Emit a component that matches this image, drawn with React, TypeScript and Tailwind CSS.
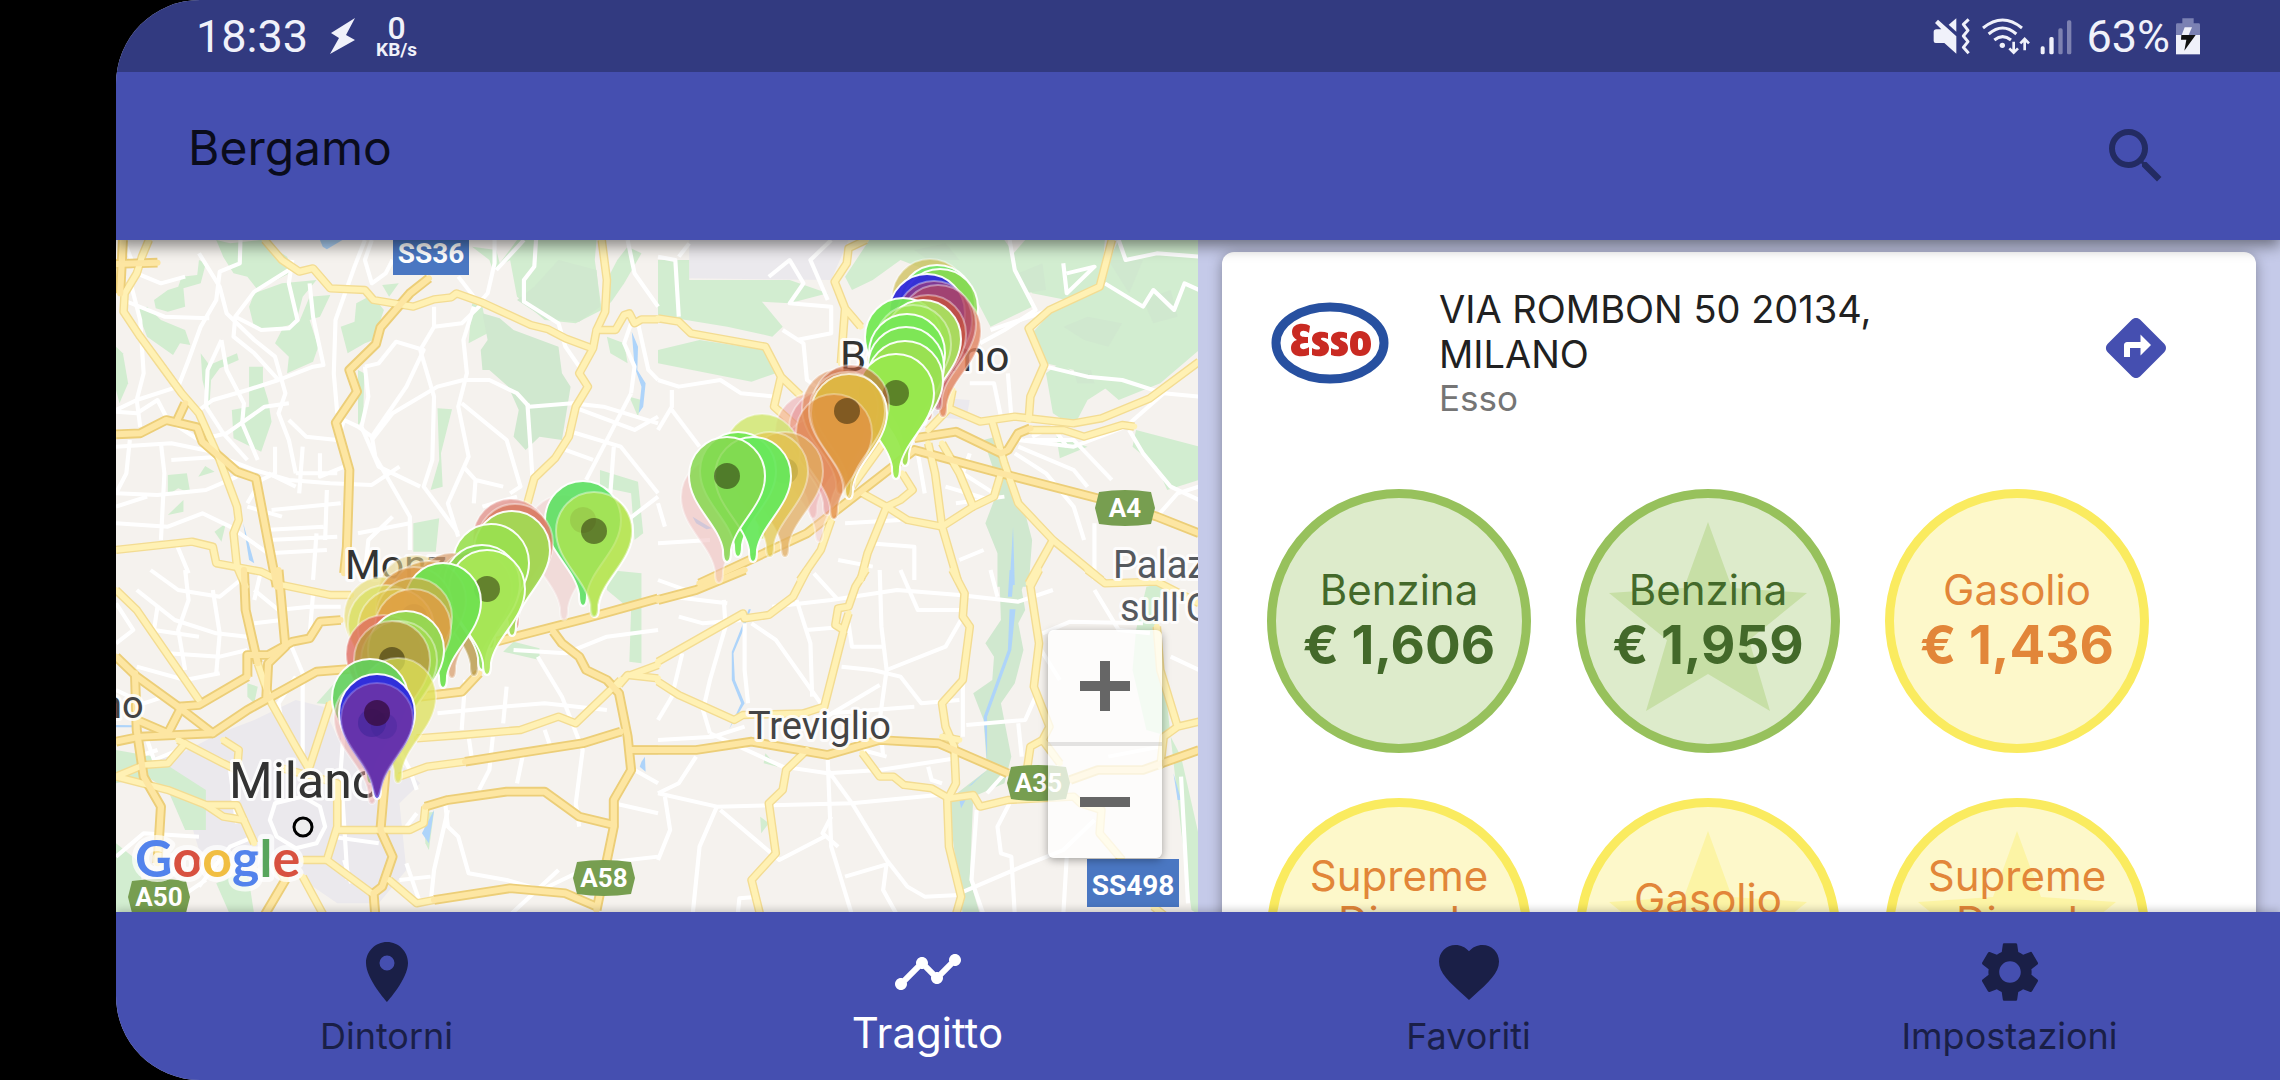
import React from 'react';
import { MdDirections, MdFavorite, MdPlace, MdSearch, MdSettings, MdTimeline } from 'react-icons/md';

/* ---------- Map data: four tiles, each drawn on its own 1568 x 1020 grid ---------- */

type Tile = {
  transform: string;
  green: string[];
  shade: string[];
  urban: string[];
  water: string[];
  streets: string[];
  roads: string[];
  highways: string[];
};

const tiles: Tile[] = [
  {
    transform: 'scale(0.3457 0.3333)',
    green: [
      'M290,0 L330,10 420,0 495,50 510,95 410,150 380,110 340,100 310,50Z',
      'M110,180 L150,150 180,140 190,110 235,105 240,60 260,70 245,130 195,145 200,200 150,215 115,205Z',
      'M385,200 L400,160 480,130 580,120 540,170 520,250 450,270 400,265Z',
      'M560,170 L620,165 590,230 560,240 585,320 570,365 495,400 500,350 460,310 480,270 530,245Z',
      'M60,210 L90,200 130,240 200,270 215,315 185,310 165,345 90,290Z',
      'M695,190 L740,165 775,210 745,300 720,310 670,340 650,260 690,245Z',
      'M1030,20 L1100,30 1110,70 1160,0 1390,0 1385,60 1405,210 1330,250 1240,240 1160,170 1140,60 1090,90 1080,60Z',
      'M245,340 L270,375 350,340 355,360 300,385 275,420 270,505 250,420Z',
      'M385,380 L425,380 425,430 440,480 450,545 420,635 340,595 335,510 385,500Z',
      'M930,505 L972,508 940,640 945,740 910,750 935,660Z',
      'M1400,690 L1510,725 1525,880 1500,900 1490,760 1400,740Z',
      'M150,705 L205,700 215,760 180,745 150,765Z',
      'M238,710 L258,678 285,695Z',
      'M150,825 L195,780 195,815Z',
      'M285,875 L318,850 305,905Z',
      'M0,320 L20,340 35,430 10,490 0,450Z',
      'M1480,20 L1520,40 1470,130 1430,190 1420,120 1450,60Z',
      'M860,850 L935,835 925,935 860,935Z',
      'M700,390 L718,400 715,540 700,555Z',
      'M770,135 L818,130 790,170Z',
      'M1030,190 L1060,200 1075,280 1020,310Z',
      'M1420,290 L1470,310 1480,370 1430,340Z',
      'M1485,470 L1520,480 1510,530Z',
    ],
    shade: [
      'M1060,220 L1110,235 1150,270 1280,320 1290,400 1315,440 1290,600 1225,590 1185,630 1150,590 1165,510 1135,440 1080,390 1060,390 1055,330 1075,300Z',
      'M1160,180 L1210,140 1280,60 1390,90 1400,200 1340,245 1240,235Z',
    ],
    urban: [],
    water: ['M590,0 L655,0 610,28 598,20Z', 'M1492,275 L1510,320 1508,390 1532,430 1525,500 1512,520 1520,440 1500,380Z', 'M368,850 L400,970 385,960Z'],
    streets: [
      'M240,40 L300,140 320,220 400,300 460,350 490,460 470,520 500,600 520,700',
      'M360,0 L358,70 300,95 290,180 245,260 210,360 180,440 60,480 0,510',
      'M500,90 L400,155 345,230 340,290 400,340 470,420',
      'M510,60 L500,130 525,240 500,265 420,270 345,230',
      'M560,130 L570,230 600,375 570,380 470,420 380,450 280,480 240,510',
      'M720,0 L690,80 635,240 630,400 640,520',
      'M740,0 L720,60 740,130 780,100 800,60',
      'M305,300 L265,390 260,500 310,580 380,660',
      'M305,300 L320,390 370,490 365,550 410,660',
      'M40,120 L70,240 80,400 60,480 70,560',
      'M0,515 L60,520 120,480 150,540 240,600 320,580 430,500 500,490',
      'M0,620 L160,610 300,640',
      'M40,600 L30,700 0,760 120,765 260,750 350,710',
      'M130,610 L140,700 130,900',
      'M0,850 L150,860 250,820 330,860 440,940 610,930',
      'M160,660 L300,650 400,690 500,720 620,730 740,735 820,680',
      'M460,620 L460,700 420,720 380,790',
      'M500,540 L550,590 640,600 660,540 700,560 740,590 750,650 850,830 850,930',
      'M520,700 L640,700 M540,620 L530,760 M590,640 L590,710 660,680',
      'M450,810 L650,790 M430,870 L600,860 M440,900 L640,890 M580,880 L570,1020 M610,750 L605,900',
      'M720,380 L760,370 810,305 890,330 840,440 740,590',
      'M720,380 L730,470 710,560 760,680 880,740',
      'M880,330 L920,470 915,660 890,740 940,810 990,880',
      'M1005,420 L930,440 800,520 740,600',
      'M1035,200 L1005,300 1015,400 990,500 1020,650 960,790 990,890',
      'M920,200 L920,260 880,330 M920,260 L1000,250 1060,190',
      'M1005,420 L1080,420 1160,460 1195,500 1320,490 1410,500 1568,550',
      'M1190,490 L1200,640 1205,720',
      'M1000,490 L1130,600 1170,740 1140,760',
      'M1005,680 L1040,720 1035,790 M1040,720 L1120,740 M1060,800 L1160,770',
      'M1095,0 L1095,70 1075,160 1050,190 990,110',
      'M1215,0 L1210,80 1180,120 1180,185 1280,250 1300,320 1340,380',
      'M1180,0 L1100,90 M1480,0 L1500,100 1568,200',
      'M1320,500 L1500,570 1568,530 M1300,570 L1460,620 1568,760',
      'M1490,460 L1440,560 1360,720 M1300,630 L1380,660 M1440,620 L1430,760',
      'M1490,250 L1470,310 1500,380 1490,460 M1510,250 L1540,390 1568,420',
      'M700,880 L850,850 M720,1000 L730,900 800,830 M1480,840 L1568,770',
      'M30,20 L60,100 130,130 200,110 M20,180 L140,230 270,235',
      'M440,700 L520,740 M380,800 L480,830 M170,900 L210,1000 M0,800 L90,770',
    ],
    roads: [
      'M95,0 L75,50 60,100 25,160 22,215 70,290 130,375 190,460 240,520 300,660 350,800 355,840 340,880 350,980 375,1040',
      'M430,0 L480,60 530,95 570,85 620,145 720,150 745,180 860,200 920,178 970,172 985,160 1060,188 1200,255 1250,268 1300,295 1370,322',
      'M1405,0 L1420,120 1415,215 1390,270 1380,325 1340,400 1365,440 1330,500 1310,590 1270,655 1210,715 1190,790',
      'M1390,270 L1445,270 1470,225 1485,220 1500,250 1520,238 1568,238',
      'M0,930 L220,905 280,920 290,970 420,995 470,1020',
    ],
    highways: [
      'M20,0 L12,160 M0,72 L120,68',
      'M905,115 L850,160 765,262 752,312 675,390 697,455 636,548 675,690 668,920 660,1000',
      'M0,583 L70,580 145,540 235,562 250,605 350,695 405,715 465,1040',
      'M200,490 L175,545',
    ],
  },
  {
    transform: 'translate(542 0) scale(0.3464 0.3333)',
    green: [
      'M610,0 L1000,0 1040,60 1080,200 960,260 900,140 700,60 620,120 560,150 540,110Z',
      'M1060,0 L1290,0 1280,130 1180,180 1080,160 1010,60Z',
      'M1330,0 L1562,0 1562,330 1450,430 1330,480 1240,400 1120,370 1080,280 1140,210 1260,150Z',
      'M0,60 L90,60 90,120 380,120 490,160 380,190 300,185 360,260 330,290 200,260 50,235 0,230Z',
      'M0,330 L120,300 310,330 340,400 270,425 0,370Z',
      'M1120,400 L1160,370 1220,410 1330,420 1240,480 1200,560 1140,520Z',
      'M1380,570 L1562,620 1562,720 1470,750 1440,680 1370,620Z',
      'M1150,590 L1240,620 1160,655Z',
    ],
    shade: [
      'M940,600 L975,590 1000,700 1050,780 1080,900 1070,1040 980,1040 980,940 945,850 985,740Z',
      'M1170,260 L1240,230 1340,250 1300,320 1230,300Z',
      'M1040,100 L1110,70 1120,150 1060,160Z',
      'M1300,60 L1400,60 1360,160Z',
      'M1400,180 L1480,150 1500,230 1430,250Z',
      'M740,30 L830,10 870,60 780,60Z',
      'M1200,390 L1250,390 1260,430 1210,430Z',
    ],
    urban: ['M90,0 L550,0 500,120 90,115Z', 'M770,470 L900,480 890,540 800,530Z'],
    water: ['M1025,860 L1030,1035 1015,1035Z', 'M100,830 L155,865 140,868 110,850Z'],
    streets: [
      'M0,50 L50,60 60,230 M90,10 L60,50',
      'M320,110 L380,60 420,130 380,190 500,200 500,280 400,300',
      'M500,0 L440,60 490,180',
      'M1015,0 L1030,90 1090,210 1000,270 930,310',
      'M1130,210 L960,270 M1170,70 L1180,160 1260,80 1180,100',
      'M1290,130 L1400,200 1430,150 1490,210 1520,130 1562,150',
      'M1330,0 L1350,60 1440,40 1562,50',
      'M0,420 L60,440 180,420 240,460 340,470',
      'M40,450 L40,500 0,570 M40,510 L120,620',
      'M360,270 L420,310 430,420 510,480',
      'M900,430 L970,430 990,530 M1010,400 L1020,530',
      'M1120,380 L1240,410 1340,420 1460,460 1562,470',
      'M1460,460 L1350,560 1200,620 1040,600',
      'M1040,620 L1200,690 1240,740 M1060,600 L1200,600 1310,720',
      'M1030,640 L1120,700 1200,800 1230,900',
      'M1260,850 L1260,1020 M1360,570 L1400,640 1480,740 1562,780',
      'M540,850 L700,840 M610,910 L740,920 740,1020 M520,960 L620,980',
      'M860,790 L1000,770 M830,740 L960,780 M870,960 L940,930',
      'M0,790 L20,860 M0,910 L150,900 M750,640 L770,760 M900,640 L880,700 970,760',
      'M1440,830 L1500,760 1562,740 M1180,620 L1140,560 1080,590',
    ],
    roads: [
      'M600,0 L550,25 545,70 510,125 540,205 585,260 M540,205 L528,370',
      'M0,235 L60,245 95,280 310,320 355,410 410,465 M355,410 L335,500 400,560',
      'M1310,0 L1275,140 1130,210 1070,265 1115,375 1075,470 1070,540',
      'M840,505 L930,545 1030,530 1200,550 1280,535 1420,475 1562,365',
      'M1075,570 L1170,570 1230,590 1340,555 1375,560',
      'M965,545 L1000,670 1040,790 1140,900 1280,1020',
      'M1140,900 L1070,1030',
      'M780,610 L800,700 820,860 865,1020',
      'M820,610 L870,700 910,800 970,770 990,700',
      'M590,760 L660,800 720,840 820,860 910,800',
      'M660,800 L605,940 585,1020',
      'M705,700 L735,750 700,780 660,800',
      'M850,450 L840,505 780,570',
      'M500,840 L470,930 410,1020',
      'M650,610 L560,740',
    ],
    highways: ['M740,595 L860,575 990,640 1010,630 1040,580 1075,565', 'M120,1030 L430,880 740,630 990,700 1270,775 1440,830 1562,880'],
  },
  {
    transform: 'translate(0 330) scale(0.3457 0.3333)',
    green: [
      'M0,540 L110,560 170,600 260,660 260,780 200,780 150,660 90,620 0,640Z',
      'M0,820 L60,870 100,1035 0,1035Z',
      'M290,940 L380,900 400,1035 330,1035Z',
      'M380,340 L410,350 400,400 380,380Z',
      'M580,400 L640,330 640,405Z',
      'M1150,215 L1225,235 1225,270 1120,245Z',
      'M1425,0 L1520,10 1520,280 1485,275 1490,120 1420,60Z',
      'M890,730 L920,725 905,840 895,820Z',
    ],
    shade: [],
    urban: [
      'M300,490 L400,450 520,390 600,410 640,500 800,560 880,640 820,700 840,900 760,1000 640,1000 500,900 330,880 240,840 200,700 140,600 90,560 170,560Z',
    ],
    water: ['M885,790 L920,720 905,820Z', 'M1520,575 L1530,560 1532,605 1515,590Z', 'M0,465 L50,466 50,472 0,472Z'],
    streets: [
      'M100,0 L180,60 300,80 360,30 M60,60 L170,150 290,190 380,200',
      'M200,0 L210,90 180,180 200,300 M280,60 L300,190 290,310 M120,110 L110,180 240,200',
      'M400,60 L470,120 560,110 650,110 M400,160 L480,150 M570,70 L560,200',
      'M500,210 L540,310 540,560 M520,320 L470,400 480,460',
      'M0,100 L50,180 0,220 M150,250 L300,260 380,240 M60,290 L200,330 300,310',
      'M90,510 L110,570 180,540 M330,600 L350,760 M660,460 L650,600 670,930',
      'M460,700 L540,680 590,710 605,770 580,820 520,835 465,800 445,750Z',
      'M0,860 L80,790 240,800 M240,950 L330,830 400,800 M160,1000 L260,930',
      'M620,800 L760,820 M660,870 L680,940 M840,880 L880,1000',
      'M930,430 L1120,410 1240,400 1420,420',
      'M1010,330 L1000,480 M1130,350 L1120,460 M1090,500 L1080,600 1050,660',
      'M1220,260 L1290,380 1350,540 1330,700 1340,770',
      'M950,680 L960,770 990,800 1020,910 1130,930 1230,960 1350,900',
      'M960,720 L920,900 910,1000 M1140,1035 L1280,900',
      'M820,540 L850,600 870,660 M870,730 L840,770 M820,930 L910,920',
      'M1150,240 L1300,250 1420,200 1568,180',
      'M1440,700 L1568,730 M1500,600 L1568,640 M1400,880 L1568,860',
      'M420,0 L400,90 M0,360 L80,400 140,380 M60,560 L120,540',
      'M1160,640 L1180,540 M1020,500 L1030,570 M1240,480 L1260,540',
    ],
    roads: [
      'M0,60 L60,120 240,390',
      'M560,600 L520,530 450,400 410,280',
      'M480,45 L620,75 680,75',
      'M180,510 L310,580 350,600 355,540 310,510',
      'M0,620 L150,660 260,705 350,705 400,820',
      'M260,705 L310,740 370,750',
      'M0,620 L80,585 150,580 200,520',
      'M620,400 L560,590',
      'M480,595 L640,640 640,770 610,870 540,870',
      'M610,870 L740,970',
      'M870,505 L1000,495 1170,480 1280,440 1330,460 1460,330',
      'M820,620 L900,590 1010,575',
      'M640,780 L850,780 890,760 895,710',
      'M540,920 L600,1035 M490,930 L460,880',
      'M790,930 L870,1000 920,990',
      'M1455,345 L1480,315 1568,325 M1490,315 L1568,285',
    ],
    highways: [
      'M370,0 L375,120 410,280 M470,0 L490,230 440,280 435,380',
      'M380,320 L380,255 440,255 510,215 560,205 590,155 650,150',
      'M0,260 L60,320 180,410 280,490 380,420 580,305 700,295',
      'M180,410 L240,405 380,320',
      'M0,515 L70,500 280,490',
      'M55,310 L60,480 80,620 130,710 120,880',
      'M190,410 L150,490 60,450',
      'M780,600 L765,780 800,860 770,950 745,970 750,1035',
      'M895,710 L960,690 1130,665 1240,665 1340,740 1440,765',
      'M1010,575 L1350,520 1460,485',
      'M880,380 L1000,365 1050,310',
      'M1100,215 L1360,145 1568,85',
      'M1265,185 L1290,220 1340,260 1360,300 1420,330 1455,370 1480,500 1490,600 1440,690 1440,770 1390,1020',
      'M1490,540 L1568,540',
      'M920,990 L1140,955 1300,970 1390,1010',
      'M490,930 L430,1035',
    ],
  },
  {
    transform: 'translate(542 330) scale(0.3464 0.3333)',
    green: [
      'M310,550 L345,590 305,580Z',
      'M295,740 L320,760 298,790Z',
      'M1410,50 L1460,40 1440,120 1480,500 1410,480 1370,300 1380,180Z',
      'M1480,500 L1510,560 1562,800 1562,1035 1540,1020 1510,780Z',
    ],
    shade: [
      'M985,0 L1070,0 1050,60 1060,120 1040,160 1055,240 1030,340 990,400 1020,560 1000,640 910,680 900,930 930,1035 880,1035 840,720 850,680 950,600 940,450 910,370 965,330 970,260 945,220 990,150Z',
    ],
    urban: [],
    water: [
      'M1015,0 L1028,0 1022,80 1010,80Z',
      'M1015,118 L1032,118 1020,240 950,440 950,570 940,440 1010,240Z',
      'M262,118 L268,118 250,170 218,250 222,330 250,400 205,478 240,400 213,330 213,245Z',
      'M895,650 L945,605 905,645Z',
      'M870,690 L888,690 875,715Z',
      'M1488,610 L1510,690 1500,690Z',
    ],
    streets: [
      'M0,30 L80,60 M40,80 L200,100 M60,140 L130,160 240,150',
      'M190,90 L195,170 150,330 130,420 150,490',
      'M250,160 L250,300 260,400 M70,250 L40,380 0,450',
      'M400,90 L440,220 445,380 M430,180 L540,170',
      'M330,110 L500,90 690,60 870,75 1040,95 1140,60',
      'M270,160 L340,210 470,400 M450,10 L520,90',
      'M640,0 L645,170 660,300 640,450 650,560',
      'M550,160 L560,230 650,230 M660,300 L830,230 880,140',
      'M700,0 L750,120 880,120 M530,290 L620,300 700,320 760,400 870,390',
      'M470,450 L640,345 M500,430 L740,410 M880,320 L880,500',
      'M0,510 L160,500 250,470 M150,490 L360,590 490,610 640,600 860,565',
      'M0,670 L170,710 560,700 860,670 M110,560 L60,640 0,670',
      'M490,570 L500,830 560,1035 M490,600 L560,700 660,870 720,950 770,980 870,975',
      'M20,680 L35,780 0,870 M170,710 L120,830 100,1035 M180,720 L350,870 480,800 M500,740 L475,790 520,830',
      'M540,920 L670,880 M660,880 L650,960 690,1035 M230,1035 L235,985 290,980',
      'M870,970 L1050,890 1170,840 1260,750 M1020,690 L980,770 990,850 1020,860 1030,1035',
      'M920,720 L905,930 940,1035 M1180,860 L1170,1035',
      'M960,0 L980,80 M1110,190 L1190,155 1400,160 M1090,380 L1060,450 890,465',
      'M1100,230 L1160,330 M1260,60 L1330,180 1420,190 M1480,260 L1562,300',
      'M1040,460 L1050,560 M950,670 L1010,600 M1300,560 L1450,530 M1510,620 L1530,1000',
      'M780,590 L790,630 820,640 M590,540 L660,560',
    ],
    roads: [
      'M430,0 L390,80 320,135 250,145 245,130 0,275',
      'M600,0 L570,50 550,110 520,115 512,165 535,180 550,130 M535,185 L480,410 420,430',
      'M430,540 L370,600 360,660 320,700 340,850 270,930 295,1035',
      'M850,0 L885,70 880,140 900,170 880,330 820,400 830,470 855,530 860,640 835,690 840,830 875,980 860,1035',
      'M1100,0 L1075,50 1100,220 1085,350 1130,470 1110,510 1075,530 1065,600 M1110,510 L1160,580',
      'M0,335 L60,375 220,450 245,435 420,430',
      'M590,550 L640,620 680,620 710,645 790,655 840,685 910,675 930,710 1010,690 1200,680 1220,700 1280,720 1275,790 1340,870',
      'M1240,0 L1290,40 1440,35 1562,100',
      'M1440,170 L1450,300 1500,470 1562,455 M1500,470 L1460,500 1450,590 M1430,1010 L1460,1035',
      'M820,500 L870,510',
    ],
    highways: ['M0,540 L110,540 270,515 490,555 640,510 810,520 1010,610', 'M0,90 L110,60 250,0', 'M1190,630 L1270,600 1400,600 1562,540'],
  },
];

type Pin = [x: number, y: number, color: string, opacity: number, dot?: boolean];

const pins: Pin[] = [
  [814, 58, '#cdbf5a', 0.75],
  [821, 64, '#6fe868', 0.9],
  [824, 68, '#8ad850', 0.85],
  [827, 91, '#e0805c', 0.8],
  [811, 73, '#2f28dc', 0.95],
  [818, 80, '#a03c78', 0.7],
  [822, 84, '#b84a5c', 0.6],
  [812, 94, '#c8543c', 0.75],
  [787, 97, '#74e854', 0.95],
  [807, 99, '#a6e860', 0.9],
  [797, 104, '#9ce454', 0.7],
  [791, 113, '#74e858', 0.9],
  [790, 126, '#7ee656', 0.9],
  [789, 140, '#9ce052', 0.9],
  [603, 257, '#eebcbc', 0.55],
  [697, 192, '#e88c94', 0.4],
  [703, 216, '#f0b8b8', 0.35],
  [711, 189, '#e07878', 0.4],
  [780, 153, '#98e84e', 0.95, true],
  [724, 168, '#e09058', 0.6],
  [735, 164, '#c8603c', 0.6],
  [733, 173, '#e0be44', 0.9],
  [718, 193, '#e08444', 0.7],
  [731, 171, '#dcb03c', 0.2, true],
  [646, 213, '#cfe66a', 0.8],
  [669, 231, '#e0ac60', 0.75, true],
  [654, 231, '#e2c850', 0.75],
  [622, 231, '#6ee850', 0.9],
  [637, 236, '#68e85c', 0.95],
  [611, 236, '#86d850', 0.85, true],
  [448, 294, '#eec4c4', 0.5],
  [479, 291, '#dcee68', 0.85],
  [467, 280, '#5ce060', 0.9, true],
  [478, 291, '#b0e454', 0.8, true],
  [395, 298, '#e08880', 0.7],
  [399, 303, '#d8785c', 0.8],
  [396, 310, '#a0dc54', 0.93],
  [375, 323, '#9ae050', 0.9],
  [300, 354, '#e6d48c', 0.6],
  [336, 352, '#d8a070', 0.75],
  [358, 350, '#b89848', 0.8],
  [366, 344, '#86dc50', 0.85],
  [371, 349, '#a8e856', 0.9, true],
  [266, 376, '#e6dc70', 0.65],
  [312, 360, '#d8a048', 0.7],
  [298, 366, '#dc9848', 0.8],
  [327, 362, '#70e250', 0.95],
  [270, 384, '#d8e060', 0.7],
  [298, 377, '#ccac48', 0.75, true],
  [280, 388, '#e0c850', 0.65],
  [297, 388, '#e09c44', 0.8],
  [268, 414, '#e06c60', 0.8],
  [290, 410, '#90dc54', 0.9],
  [283, 420, '#a8dc50', 0.6],
  [276, 420, '#b89640', 0.8, true],
  [282, 457, '#dce058', 0.75],
  [254, 458, '#62d05c', 0.9],
  [256, 478, '#eaa0a0', 0.5],
  [261, 473, '#2e2cdc', 0.98],
];

const PIN_PATH =
  'M0,86 C-4,86 -4,80 -4,74 C-8,48 -38,30 -38,0 A38,39 0 1 1 38,0 C38,30 8,48 4,74 C4,80 4,86 0,86Z';

const places = [
  { name: 'Milano', x: 113, y: 558, size: 50, fill: '#333' },
  { name: 'Monza', x: 229, y: 339, size: 41, fill: '#333' },
  { name: 'Bergamo', x: 724, y: 131, size: 42, fill: '#333' },
  { name: 'Treviglio', x: 632, y: 499, size: 38, fill: '#444' },
  { name: 'Palaz', x: 997, y: 338, size: 38, fill: '#55595e' },
  { name: "sull'O", x: 1004, y: 381, size: 38, fill: '#55595e' },
  { name: 'no', x: -15, y: 478, size: 38, fill: '#444' },
];

function Motorway({ name, x, y, w }: { name: string; x: number; y: number; w: number }) {
  const d = `M${x + 4},${y + 2} Q${x + w / 2},${y - 2} ${x + w - 4},${y + 2} L${x + w},${y + 18} L${x + w - 4},${y + 34} Q${x + w / 2},${y + 38} ${x + 4},${y + 34} L${x},${y + 18}Z`;
  return (
    <g>
      <path d={d} fill="#779e50" />
      <text x={x + w / 2} y={y + 27} fontSize="26" fontWeight="700" textAnchor="middle" fill="#fff">
        {name}
      </text>
    </g>
  );
}

function StateRoad({ name, x, y, w, h }: { name: string; x: number; y: number; w: number; h: number }) {
  return (
    <g>
      <rect x={x} y={y} width={w} height={h} fill="#4a77c2" />
      <text x={x + w / 2} y={y + h - 12} fontSize="28" fontWeight="700" textAnchor="middle" fill="#fff">
        {name}
      </text>
    </g>
  );
}

type Layer = 'green' | 'shade' | 'urban' | 'water' | 'streets' | 'roads' | 'highways';

function MapLayer({ layer, ...paint }: { layer: Layer } & React.SVGProps<SVGGElement>) {
  return (
    <g strokeLinejoin="round" {...paint}>
      {tiles.map((tile) => (
        <g key={tile.transform} transform={tile.transform}>
          {tile[layer].map((d) => (
            <path key={d} d={d} />
          ))}
        </g>
      ))}
    </g>
  );
}

function RouteMap() {
  return (
    <svg
      viewBox="0 0 1082 672"
      preserveAspectRatio="xMidYMid slice"
      className="absolute inset-0 size-full font-[Roboto,sans-serif]"
      role="img"
      aria-label="Mappa del tragitto Milano – Bergamo"
    >
      <rect width="1082" height="672" fill="#f5f2ee" />
      <MapLayer layer="urban" fill="#ebe9ed" />
      <MapLayer layer="green" fill="#d2edd0" />
      <MapLayer layer="shade" fill="#d0e8cf" />
      <MapLayer layer="water" fill="#aed4fa" />
      <MapLayer layer="streets" fill="none" stroke="#fff" strokeWidth="12" />
      <MapLayer layer="roads" fill="none" stroke="#f3dc92" strokeWidth="25" />
      <MapLayer layer="highways" fill="none" stroke="#ecce78" strokeWidth="29" />
      <MapLayer layer="roads" fill="none" stroke="#fff1b4" strokeWidth="17" strokeLinecap="round" />
      <MapLayer layer="highways" fill="none" stroke="#fde6a2" strokeWidth="18" strokeLinecap="round" />

      <Motorway name="A4" x={979} y={250} w={60} />
      <Motorway name="A35" x={891} y={525} w={63} />
      <Motorway name="A58" x={457} y={620} w={62} />
      <Motorway name="A50" x={12} y={639} w={62} />
      <StateRoad name="SS36" x={277} y={-10} w={76} h={45} />
      <StateRoad name="SS498" x={971} y={619} w={92} h={48} />

      {places.map((p) => (
        <text
          key={p.name}
          x={p.x}
          y={p.y}
          fontSize={p.size}
          fill={p.fill}
          stroke="#fff"
          strokeOpacity="0.85"
          strokeWidth="6"
          strokeLinejoin="round"
          paintOrder="stroke"
        >
          {p.name}
        </text>
      ))}
      <circle cx="187" cy="587" r="9" fill="#eee" stroke="#000" strokeWidth="3" />

      {pins.map(([x, y, color, opacity, dot], i) => (
        <g key={i} transform={`translate(${x} ${y})`}>
          <path d={PIN_PATH} fill={color} fillOpacity={opacity} stroke="#fff" strokeOpacity={opacity > 0.84 ? 0.95 : 0.4} strokeWidth="2" />
          {dot && <circle r="13" fill="#1c1400" fillOpacity="0.48" />}
        </g>
      ))}
      <g transform="translate(261 473)">
        <path
          d="M0,84 C-2,84 -4,74 -6,68 C-14,46 -36,30 -36,5 A36,35 0 0 1 36,5 C36,30 14,46 6,68 C4,74 2,84 0,84Z"
          fill="#6c34a6"
          fillOpacity="0.9"
          stroke="#9a8cf0"
          strokeOpacity="0.5"
          strokeWidth="2"
        />
        <circle cx="-5" cy="10" r="14" fill="#3a2496" fillOpacity="0.5" />
        <circle cx="7" cy="13" r="13" fill="#3a2496" fillOpacity="0.3" />
        <circle r="13" fill="#3a0f48" fillOpacity="0.85" />
      </g>

      <text
        x="19"
        y="637"
        fontSize="52"
        fontFamily="Lato, sans-serif"
        stroke="#fff"
        strokeOpacity="0.7"
        strokeWidth="10"
        strokeLinejoin="round"
        paintOrder="stroke"
        fontWeight="700"
      >
        <tspan fill="#5383ec">G</tspan>
        <tspan fill="#d85140">o</tspan>
        <tspan fill="#f1be42">o</tspan>
        <tspan fill="#5383ec">g</tspan>
        <tspan fill="#58a55c">l</tspan>
        <tspan fill="#d85140">e</tspan>
      </text>
    </svg>
  );
}

/* ---------- Status bar icons ---------- */

function MutedVibrateIcon() {
  return (
    <svg viewBox="400 50 111 111" className="size-[37px]" fill="#f0f1fa" aria-hidden="true">
      <path d="M402,92 q0,-8 8,-8 H425 L406,65 L415,55 L470,105 V157 L434,125 H408 q-6,0 -6,-6Z" />
      <path d="M447,70 L470,51 V91Z" />
      <path d="M507,54 L491,69 L505,87 L491,104 L505,121 L491,138 L507,156" fill="none" stroke="#f0f1fa" strokeWidth="9" strokeLinejoin="round" />
    </svg>
  );
}

function WifiIcon() {
  return (
    <svg viewBox="549 50 144 111" className="h-[37px] w-[48px]" fill="none" stroke="#f0f1fa" strokeWidth="9" aria-hidden="true">
      <path d="M552,80 Q611,32 669,80 M569,98 Q611,62 652,98 M586,116 Q611,96 636,116" />
      <circle cx="610" cy="132" r="8" fill="#f0f1fa" stroke="none" />
      <path d="M644,121 V150 M631,141 L644,154 L657,141 M677,147 V117 M664,126 L677,113 L690,126" strokeWidth="8" />
    </svg>
  );
}

function SignalIcon() {
  return (
    <svg viewBox="720 50 96 111" className="h-[37px] w-[32px]" fill="#f0f1fa" aria-hidden="true">
      <rect x="722" y="135" width="12" height="24" rx="5" />
      <rect x="748" y="107" width="13" height="52" rx="5" />
      <rect x="775" y="81" width="13" height="78" rx="5" opacity="0.4" />
      <rect x="801" y="57" width="13" height="102" rx="5" opacity="0.4" />
    </svg>
  );
}

function BatteryIcon() {
  return (
    <svg viewBox="1128 50 72 111" className="h-[37px] w-[24px]" aria-hidden="true">
      <path d="M1128,101 V70 q0,-4 4,-4 H1147 V51 H1181 V66 H1196 q4,0 4,4 V101Z" fill="#7b81b3" />
      <path d="M1128,101 H1200 V159 H1128Z" fill="#f0f1fa" />
      <path d="M1154,78 H1176 L1166,101 H1145Z" fill="#f0f1fa" />
      <path d="M1144,101 H1187 L1153,148 L1159,115 H1143Z" fill="#111" />
    </svg>
  );
}

function StatusBar() {
  return (
    <div className="relative z-20 flex h-[72px] shrink-0 items-center bg-[#323a80] pr-20 pl-20 font-[Roboto,sans-serif] text-[#f0f1fa]">
      <time className="text-[45px] leading-none">18:33</time>
      <svg viewBox="330 17 26 38" className="ml-[22px] h-[38px] w-[26px]" fill="#f0f1fa" aria-hidden="true">
        <path d="M355,18 L331,33 L339,38 L330,54 L355,40 L346,35Z" />
      </svg>
      <div className="ml-5 flex flex-col items-center">
        <span className="text-[32px] leading-7 font-medium">0</span>
        <span className="text-[19px] leading-4 font-bold">KB/s</span>
      </div>
      <div className="ml-auto flex items-center">
        <MutedVibrateIcon />
        <span className="w-3" />
        <WifiIcon />
        <span className="w-2.5" />
        <SignalIcon />
        <span className="ml-3.5 text-[45px] leading-none">63%</span>
        <span className="w-1.5" />
        <BatteryIcon />
      </div>
    </div>
  );
}

/* ---------- Station card ---------- */

function EssoLogo() {
  return (
    <svg viewBox="0 0 118 82" className="mt-[50px] h-[82px] w-[118px] shrink-0" role="img" aria-label="Esso">
      <ellipse cx="59" cy="41" rx="54" ry="36" fill="#fff" stroke="#2750a0" strokeWidth="9" />
      <g fill="#c92a22">
        <path d="M39,24 C33,20 21,21 21,30 C21,34 23,36 26,38 C22,39 20,42 20,46 C20,54 29,56 38,53 L38,45 C34,48 29,48 29,44 C29,41 32,41 37,41 L37,35 C33,35 29,35 29,32 C29,28 34,28 38,31Z" />
        <path d="M57,31 C50,28 41,30 41,37 C41,43 49,43 49,46 C49,48 45,48 41,46 L41,53 C49,56 58,54 58,46 C58,39 50,39 50,37 C50,35 54,36 57,37Z" />
        <path d="M76,31 C69,28 60,30 60,37 C60,43 68,43 68,46 C68,48 64,48 60,46 L60,53 C68,56 77,54 77,46 C77,39 69,39 69,37 C69,35 73,36 76,37Z" />
        <path
          fillRule="evenodd"
          d="M89,29 C82,29 79,34 79,42 C79,50 82,54 89,54 C96,54 100,50 100,42 C100,34 96,29 89,29Z M89,36 C91,36 92,38 92,42 C92,46 91,48 89,48 C87,48 87,46 87,42 C87,38 87,36 89,36Z"
        />
      </g>
    </svg>
  );
}

type Price = { fuel: string; price: string; tone: 'green' | 'yellow'; starred?: boolean };

const prices: Price[] = [
  { fuel: 'Benzina', price: '€ 1,606', tone: 'green' },
  { fuel: 'Benzina', price: '€ 1,959', tone: 'green', starred: true },
  { fuel: 'Gasolio', price: '€ 1,436', tone: 'yellow' },
  { fuel: 'Supreme Diesel', price: '€ 1,526', tone: 'yellow' },
  { fuel: 'Gasolio', price: '€ 1,789', tone: 'yellow', starred: true },
  { fuel: 'Supreme Diesel', price: '€ 1,859', tone: 'yellow', starred: true },
];

const tones = {
  green: { circle: 'border-[#97c15c] bg-[#ddebcb] text-[#43692a]', star: 'text-[#c7dfa6]' },
  yellow: { circle: 'border-[#faeb5f] bg-[#fdf8ca] text-[#e28639]', star: 'text-[#fcf4a5]' },
};

function PriceCircle({ fuel, price, tone, starred }: Price) {
  return (
    <li
      className={`relative flex size-[264px] flex-col items-center justify-center rounded-full border-[9px] pt-0.5 text-center ${tones[tone].circle}`}
    >
      {starred && (
        <svg viewBox="0 0 246 246" className={`absolute inset-0 ${tones[tone].star}`} fill="currentColor" aria-hidden="true">
          <path d="M123,24 L147,90 L222,95 L164,142 L185,213 L123,176 L61,213 L82,142 L24,95 L99,90Z" />
        </svg>
      )}
      <span className="relative w-[200px] text-[42px] leading-[46px]">{fuel}</span>
      <strong className="relative text-[53px] leading-[64px] font-bold">{price}</strong>
    </li>
  );
}

function StationCard() {
  return (
    <article className="mx-6 mt-3 rounded-xl bg-white pb-11 pl-[45px] shadow-[0_3px_14px_rgba(0,0,0,0.35)]">
      <header className="flex pr-[84px] pl-1">
        <EssoLogo />
        <div className="ml-[50px] flex-1 pt-[35px]">
          <h2 className="max-w-[520px] text-[38px] leading-[45px] text-[#212121]">VIA ROMBON 50 20134, MILANO</h2>
          <p className="text-[35px] leading-[42px] text-[#757575]">Esso</p>
        </div>
        <button type="button" aria-label="Indicazioni" className="mt-[60px] size-[72px] text-[#454fb0]">
          <MdDirections className="size-full" />
        </button>
      </header>
      <ul className="mt-[70px] flex flex-wrap gap-[45px]">
        {prices.map((p) => (
          <PriceCircle key={p.fuel + p.price} {...p} />
        ))}
      </ul>
    </article>
  );
}

/* ---------- Navigation ---------- */

const tabs = [
  { label: 'Dintorni', Icon: MdPlace },
  { label: 'Tragitto', Icon: MdTimeline, active: true },
  { label: 'Favoriti', Icon: MdFavorite },
  { label: 'Impostazioni', Icon: MdSettings },
];

function BottomNav() {
  return (
    <nav className="z-10 flex h-[168px] shrink-0 bg-[#454fb0] shadow-[0_-2px_8px_rgba(0,0,0,0.2)]">
      {tabs.map(({ label, Icon, active }) => (
        <a
          key={label}
          href={`#${label.toLowerCase()}`}
          aria-current={active ? 'page' : undefined}
          className={`flex flex-1 flex-col items-center pt-6 ${active ? 'text-white' : 'text-[#1a1f47]'}`}
        >
          <Icon className="size-[72px]" />
          <span className={active ? 'text-[42px] leading-[50px]' : 'text-[36px] leading-[56px]'}>{label}</span>
        </a>
      ))}
    </nav>
  );
}

export default function App() {
  return (
    <div className="h-screen bg-black pl-[116px] font-[Inter,sans-serif]">
      <div className="flex h-full flex-col overflow-hidden rounded-l-[84px] bg-[#c5cae9]">
        <StatusBar />
        <header className="z-10 flex h-[168px] shrink-0 items-center justify-between bg-[#454fb0] pr-[108px] pl-[72px] shadow-[0_6px_14px_rgba(0,0,0,0.45)]">
          <h1 className="pb-4 text-[48px] leading-[60px] text-[#0a0c1c]">Bergamo</h1>
          <button type="button" aria-label="Cerca" className="size-[72px] text-[#232b62]">
            <MdSearch className="size-full" />
          </button>
        </header>
        <main className="flex min-h-0 flex-1">
          <section className="relative flex-1 overflow-hidden" aria-label="Mappa">
            <RouteMap />
            <div className="absolute right-9 bottom-[54px] flex w-[114px] flex-col rounded-md bg-white/75 shadow-[0_2px_8px_rgba(0,0,0,0.35)]">
              <button type="button" aria-label="Ingrandisci" className="flex h-[116px] items-center justify-center border-b-4 border-black/10">
                <svg viewBox="0 0 50 50" className="size-[50px]" fill="#666">
                  <path d="M20,0 H30 V20 H50 V30 H30 V50 H20 V30 H0 V20 H20Z" />
                </svg>
              </button>
              <button type="button" aria-label="Riduci" className="flex h-[112px] items-center justify-center">
                <svg viewBox="0 0 50 50" className="size-[50px]" fill="#666">
                  <path d="M0,20 H50 V30 H0Z" />
                </svg>
              </button>
            </div>
          </section>
          <section className="flex-1 overflow-y-auto [scrollbar-width:none]" aria-label="Distributori">
            <StationCard />
          </section>
        </main>
        <BottomNav />
      </div>
    </div>
  );
}
